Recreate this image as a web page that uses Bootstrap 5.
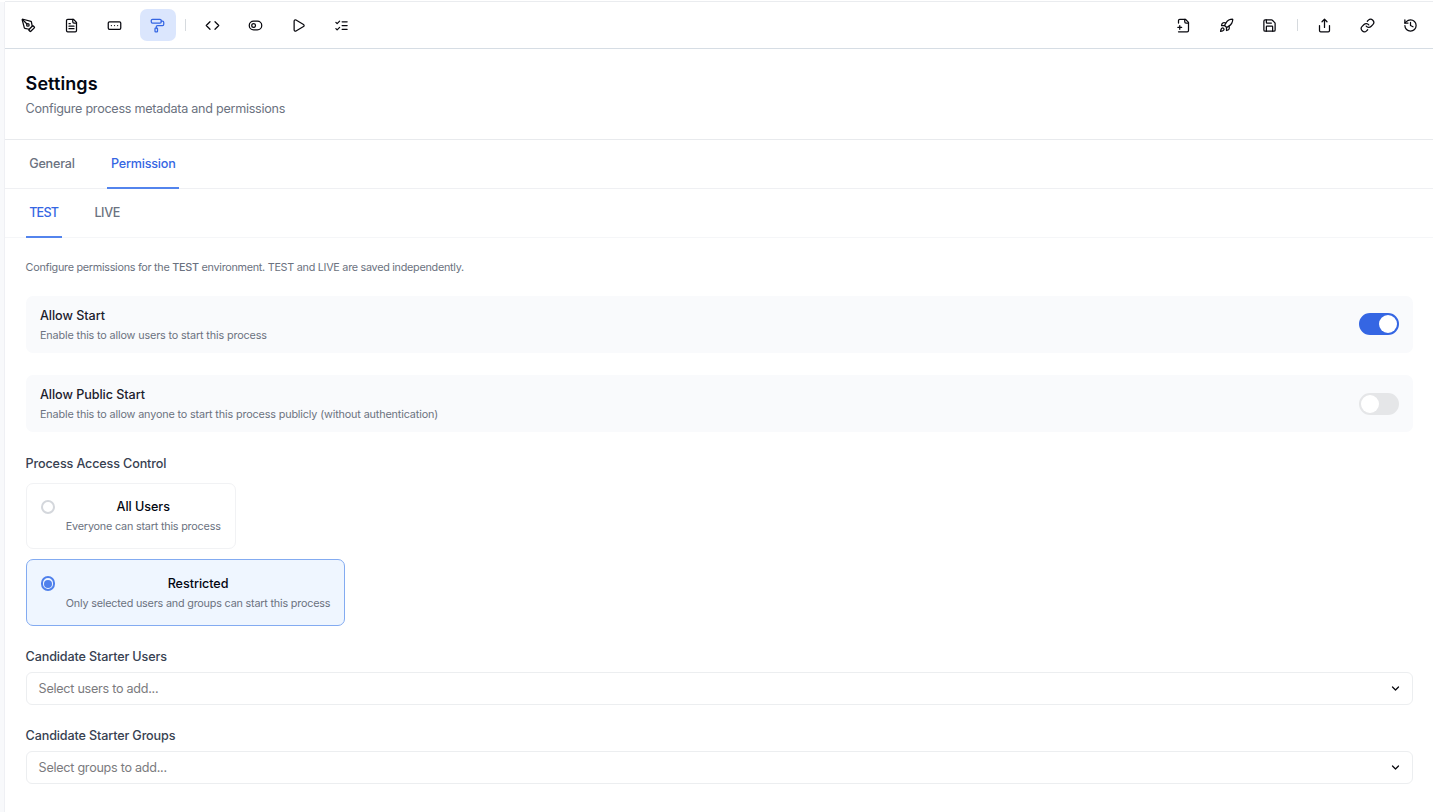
<!DOCTYPE html>
<html lang="en">
<head>
<meta charset="utf-8">
<meta name="viewport" content="width=device-width, initial-scale=1">
<title>Process settings</title>
<link rel="stylesheet" href="https://cdn.jsdelivr.net/npm/bootstrap@5.3.0/dist/css/bootstrap.min.css">
<style>
body{font-family:Inter,"Liberation Sans",sans-serif;font-size:12.6px;line-height:18px;color:#030712;background:#fff;height:812px;overflow:hidden;white-space:nowrap}
svg{fill:none;stroke:currentColor;stroke-width:2;stroke-linecap:round;stroke-linejoin:round;display:block}
.rail{width:5px;background:#f8f9fb;border-right:1px solid #eff0f4;margin-top:2px}
.workspace{min-width:0}
.topline{height:1px;margin-top:1px;background:#eaecef}
.toolbar{height:47px;border-bottom:1px solid #d6dde4;padding:0 4.4px 0 5.2px}
.tools{gap:7.2px}
.tool{width:36px;height:32px;padding:0;border:0;border-radius:7px;color:#09090f}
.tool svg{width:15px;height:15px}
.tool.active{background:#dbe6fd;color:#3566e3}
.rule{width:1px;height:12px;margin:0 1.5px 0 1.8px;background:#d6dade}
.page-head{height:91px;border-bottom:1px solid #e8eaed;padding:23px 20.6px 0}
.page-head h1{font-size:18px;line-height:24px;font-weight:600;letter-spacing:.08px;margin:0 0 4px}
.hint{color:#6b7280;letter-spacing:-.266px}
.tabs{height:49px;border-bottom:1px solid #eff0f3;padding-left:20.6px;gap:29px}
.tabs.env{border-color:#f5f6f8}
.tabs .nav-link{height:49px;padding:1px 3.6px 0;border:0;border-bottom:2px solid transparent;border-radius:0;color:#6b7280;font-weight:500;letter-spacing:-.2px}
.tabs .nav-link.active{color:#3566e3;border-color:#5384ed}
.env .nav-link{letter-spacing:-.39px}
.env .nav-link.active{letter-spacing:-.79px}
.main{padding:0 20px 0 20.6px}
.tiny{font-size:10.8px;line-height:16px;color:#6b7280;letter-spacing:-.14px}
.intro{margin:22px 0 20px;letter-spacing:-.274px}
.option{height:57px;border-radius:7px;background:#f9fafc;padding:0 14px 0 14.4px;margin-bottom:22.4px}
.option .title{margin-top:1px}
.title{font-weight:500;color:#1b202c;line-height:18px;letter-spacing:-.05px;margin-bottom:3px}
.switch{width:40px;height:22px;margin-bottom:.4px;border:2px solid #3566e3;border-radius:11px;background:#3566e3}
.switch i{width:18px;height:18px;border-radius:50%;background:#fff}
.switch.off{border-color:#e5e6e8;background:#e5e6e8}
.field{font-weight:500;color:#374151;line-height:18px;letter-spacing:-.14px;margin:21.6px 0 6.6px}
.field.access{margin:0 0 10.4px}
.choice{width:fit-content;border:1px solid #f1f2f4;border-radius:7px;padding:14px 14px 0;gap:10.8px;height:66px;margin-bottom:9.8px}
.choice.chosen{border-color:#83abf1;background:#eff6ff;height:67px;padding-top:15px;margin-bottom:20.6px}
.choice .title{color:#030712}
.choice .tiny{letter-spacing:-.195px}
.dot{width:14.4px;height:14.4px;border:2px solid #d4d7dc;border-radius:50%;margin-top:1.4px}
.chosen .dot{border-color:#4f80ec}
.chosen .dot::before{content:"";width:8px;height:8px;border-radius:50%;background:#4f80ec}
.picker{height:33px;border:1px solid #eceef0;border-radius:6px;padding:0 12px;color:#7b7b7e;letter-spacing:-.265px}
.picker span{padding-top:1px}
.picker svg{width:9px;height:9px;color:#09090f;stroke-width:3.4}
</style>
</head>
<body class="d-flex">
<aside class="rail flex-shrink-0"></aside>
<div class="workspace flex-grow-1">
  <div class="topline"></div>
  <header class="toolbar d-flex align-items-center justify-content-between">
    <div class="tools d-flex align-items-center">
      <button class="tool btn d-flex align-items-center justify-content-center" aria-label="Design"><svg viewBox="0 0 24 24"><path d="M15.707 21.293a1 1 0 0 1-1.414 0l-1.586-1.586a1 1 0 0 1 0-1.414l5.586-5.586a1 1 0 0 1 1.414 0l1.586 1.586a1 1 0 0 1 0 1.414z"/><path d="m18 13-1.375-6.874a1 1 0 0 0-.746-.776L3.235 2.028a1 1 0 0 0-1.207 1.207L5.35 15.879a1 1 0 0 0 .776.746L13 18"/><path d="m2.3 2.3 7.286 7.286"/><circle cx="11" cy="11" r="2"/></svg></button>
      <button class="tool btn d-flex align-items-center justify-content-center" aria-label="Forms"><svg viewBox="0 0 24 24"><path d="M15 2H6a2 2 0 0 0-2 2v16a2 2 0 0 0 2 2h12a2 2 0 0 0 2-2V7Z"/><path d="M14 2v4a2 2 0 0 0 2 2h4M10 9H8M16 13H8M16 17H8"/></svg></button>
      <button class="tool btn d-flex align-items-center justify-content-center" aria-label="Fields"><svg viewBox="0 0 24 24"><rect width="20" height="12" x="2" y="6" rx="2"/><path d="M12 12h.01M17 12h.01M7 12h.01"/></svg></button>
      <button class="tool btn active d-flex align-items-center justify-content-center" aria-label="Settings"><svg viewBox="0 0 24 24"><rect width="16" height="6" x="2" y="2" rx="2"/><path d="M10 16v-2a2 2 0 0 1 2-2h8a2 2 0 0 0 2-2V7a2 2 0 0 0-2-2h-2"/><rect width="4" height="6" x="8" y="16" rx="1"/></svg></button>
      <span class="rule"></span>
      <button class="tool btn d-flex align-items-center justify-content-center" aria-label="Code"><svg viewBox="0 0 24 24"><path d="m16 18 6-6-6-6M8 6l-6 6 6 6"/></svg></button>
      <button class="tool btn d-flex align-items-center justify-content-center" aria-label="Toggle"><svg viewBox="0 0 24 24"><circle cx="9" cy="12" r="3"/><rect width="20" height="14" x="2" y="5" rx="7"/></svg></button>
      <button class="tool btn d-flex align-items-center justify-content-center" aria-label="Run"><svg viewBox="0 0 24 24"><path d="M5 5a2 2 0 0 1 3.008-1.728l11.997 6.998a2 2 0 0 1 .003 3.458l-12 7A2 2 0 0 1 5 19z"/></svg></button>
      <button class="tool btn d-flex align-items-center justify-content-center" aria-label="Checks"><svg viewBox="0 0 24 24"><path d="m3 17 2 2 4-4M3 7l2 2 4-4M13 6h8M13 12h8M13 18h8"/></svg></button>
    </div>
    <div class="tools d-flex align-items-center">
      <button class="tool btn d-flex align-items-center justify-content-center" aria-label="New"><svg viewBox="0 0 24 24"><path d="M4 22h14a2 2 0 0 0 2-2V7l-5-5H6a2 2 0 0 0-2 2v4"/><path d="M14 2v4a2 2 0 0 0 2 2h4M3 15h6M6 12v6"/></svg></button>
      <button class="tool btn d-flex align-items-center justify-content-center" aria-label="Deploy"><svg viewBox="0 0 24 24"><path d="M4.5 16.5c-1.5 1.26-2 5-2 5s3.74-.5 5-2c.71-.84.7-2.13-.09-2.91a2.18 2.18 0 0 0-2.91-.09z"/><path d="m12 15-3-3a22 22 0 0 1 2-3.95A12.88 12.88 0 0 1 22 2c0 2.72-.78 7.5-6 11a22.35 22.35 0 0 1-4 2z"/><path d="M9 12H4s.55-3.03 2-4c1.62-1.08 5 0 5 0M12 15v5s3.03-.55 4-2c1.08-1.62 0-5 0-5"/></svg></button>
      <button class="tool btn d-flex align-items-center justify-content-center" aria-label="Save"><svg viewBox="0 0 24 24"><path d="M15.2 3a2 2 0 0 1 1.4.6l3.8 3.8a2 2 0 0 1 .6 1.4V19a2 2 0 0 1-2 2H5a2 2 0 0 1-2-2V5a2 2 0 0 1 2-2z"/><path d="M17 21v-7a1 1 0 0 0-1-1H8a1 1 0 0 0-1 1v7M7 3v4a1 1 0 0 0 1 1h7"/></svg></button>
      <span class="rule"></span>
      <button class="tool btn d-flex align-items-center justify-content-center" aria-label="Share"><svg viewBox="0 0 24 24"><path d="M12 2v13M16 6l-4-4-4 4M4 12v8a2 2 0 0 0 2 2h12a2 2 0 0 0 2-2v-8"/></svg></button>
      <button class="tool btn d-flex align-items-center justify-content-center" aria-label="Link"><svg viewBox="0 0 24 24"><path d="M10 13a5 5 0 0 0 7.54.54l3-3a5 5 0 0 0-7.07-7.07l-1.72 1.71"/><path d="M14 11a5 5 0 0 0-7.54-.54l-3 3a5 5 0 0 0 7.07 7.07l1.71-1.71"/></svg></button>
      <button class="tool btn d-flex align-items-center justify-content-center" aria-label="History"><svg viewBox="0 0 24 24"><path d="M3 12a9 9 0 1 0 9-9 9.75 9.75 0 0 0-6.74 2.74L3 8"/><path d="M3 3v5h5M12 7v5l4 2"/></svg></button>
    </div>
  </header>
  <section class="page-head">
    <h1>Settings</h1>
    <div class="hint">Configure process metadata and permissions</div>
  </section>
  <nav class="tabs nav flex-nowrap">
    <a class="nav-link d-flex align-items-center" href="#">General</a>
    <a class="nav-link active d-flex align-items-center" href="#">Permission</a>
  </nav>
  <nav class="tabs env nav flex-nowrap">
    <a class="nav-link active d-flex align-items-center" href="#">TEST</a>
    <a class="nav-link d-flex align-items-center" href="#">LIVE</a>
  </nav>
  <main class="main">
    <p class="tiny intro">Configure permissions for the <span class="fw-medium">TEST</span> environment. TEST and LIVE are saved independently.</p>
    <div class="option d-flex align-items-center justify-content-between">
      <div><div class="title">Allow Start</div><div class="tiny">Enable this to allow users to start this process</div></div>
      <span class="switch d-flex justify-content-end" role="switch" aria-checked="true"><i></i></span>
    </div>
    <div class="option d-flex align-items-center justify-content-between">
      <div><div class="title">Allow Public Start</div><div class="tiny">Enable this to allow anyone to start this process publicly (without authentication)</div></div>
      <span class="switch off d-flex" role="switch" aria-checked="false"><i></i></span>
    </div>
    <div class="field access">Process Access Control</div>
    <div class="choice d-flex">
      <span class="dot flex-shrink-0"></span>
      <div class="text-center"><div class="title">All Users</div><div class="tiny">Everyone can start this process</div></div>
    </div>
    <div class="choice chosen d-flex">
      <span class="dot flex-shrink-0 d-flex align-items-center justify-content-center"></span>
      <div class="text-center"><div class="title">Restricted</div><div class="tiny">Only selected users and groups can start this process</div></div>
    </div>
    <div class="field">Candidate Starter Users</div>
    <div class="picker d-flex align-items-center justify-content-between"><span>Select users to add...</span><svg viewBox="0 0 24 24"><path d="m4 8 8 8 8-8"/></svg></div>
    <div class="field">Candidate Starter Groups</div>
    <div class="picker d-flex align-items-center justify-content-between"><span>Select groups to add...</span><svg viewBox="0 0 24 24"><path d="m4 8 8 8 8-8"/></svg></div>
  </main>
</div>
<script src="https://cdn.jsdelivr.net/npm/bootstrap@5.3.0/dist/js/bootstrap.bundle.min.js"></script>
</body>
</html>
